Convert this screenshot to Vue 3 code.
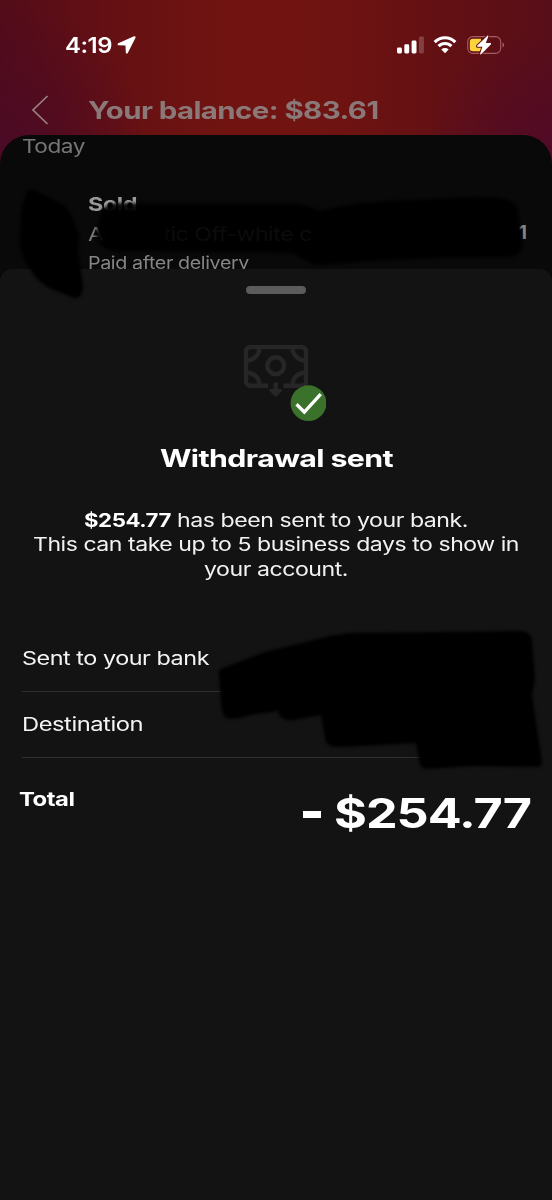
<script setup>
import { ref } from 'vue'

const balance = ref('$83.61')
const amount = ref('$254.77')

// Widens a label horizontally so the typeface reads as an extended grotesque.
const vExtend = {
  mounted(el, binding) {
    const range = document.createRange()
    range.selectNodeContents(el)
    const natural = range.getBoundingClientRect().width
    if (!natural) return
    el.style.width = binding.value + 'px'
    el.style.transform = `scaleX(${binding.value / natural})`
  }
}
</script>

<template>
  <main class="phone">
    <div class="status">
      <div class="clock">
        <span v-extend="47" class="x time">4:19</span>
        <svg width="20" height="20" viewBox="0 0 20 20"><path d="M17 1.300 1.300 8.300c-1.100.5-.9 1.800.3 1.900l6.900.2.300 7.200c.1 1.300 1.500 1.400 2 .300L18.500 2.800c.5-1.100-.4-2-1.500-1.500Z" fill="#fff" /></svg>
      </div>
      <div class="indicators">
        <svg width="27" height="18" viewBox="0 0 27 18" fill="#fff">
          <rect x="0" y="11.5" width="4.9" height="6" rx="1.4" />
          <rect x="7.3" y="8.3" width="4.9" height="9.2" rx="1.4" />
          <rect x="14.6" y="4.5" width="4.9" height="13" rx="1.4" />
          <rect x="22" y=".5" width="4.9" height="17" rx="1.4" opacity=".2" />
        </svg>
        <svg width="24" height="18" viewBox="0 0 24 18" fill="none" stroke="#fff" stroke-width="3.1">
          <path d="M1.7 6.1a14.5 14.5 0 0 1 20.6 0" />
          <path d="M5.6 10.2a9 9 0 0 1 12.8 0" />
          <path d="M12 17.2 8.3 13.5a5.4 5.4 0 0 1 7.4 0Z" fill="#fff" stroke="none" />
        </svg>
        <svg width="38" height="20" viewBox="0 0 38 20">
          <rect x=".7" y="1.6" width="33" height="16.8" rx="5.2" fill="none" stroke="#a65d61" stroke-width="1.1" />
          <path d="M35.5 7.5v5c2.2-.8 2.2-4.2 0-5Z" fill="#a65d61" />
          <path d="M6 3.7h8v12.600H6A3.200 3.200 0 0 1 2.800 13V7A3.200 3.200 0 0 1 6 3.700Z" fill="#fbd33c" />
          <path d="M20.200.9 10.300 10.500c-.6.7-.2 1.300.6 1.300h4.500l-2.200 6.600c-.3 1 .5 1.300 1.200.6l9.400-9.600c.6-.7.2-1.300-.6-1.300h-4.400L21.300 1.500c.3-.9-.5-1.300-1.100-.6Z" fill="#fff" stroke="#611114" stroke-width="2" paint-order="stroke" />
        </svg>
      </div>
    </div>

    <header class="bar">
      <svg class="back" width="18" height="32" viewBox="0 0 18 32"><path d="M16.500 2 2 16l14.500 14" fill="none" stroke="#9a8083" stroke-width="1.700" /></svg>
      <h1 v-extend="290.5" class="x">Your balance: {{ balance }}</h1>
    </header>

    <section class="history">
      <div class="day"><span v-extend="63" class="x">Today</span></div>
      <div class="entry">
        <div class="lines">
          <div class="l1"><b v-extend="49" class="x">Sold</b></div>
          <div class="l2"><span v-extend="224" class="x">Authentic Off-white c</span></div>
          <div class="l3"><span v-extend="161" class="x">Paid after delivery</span></div>
        </div>
        <b class="price">1</b>
      </div>
    </section>

    <section class="sheet">
      <div class="grip"></div>
      <svg class="emblem" width="84" height="78" viewBox="0 0 84 78" fill="none">
        <g stroke="#262626" stroke-width="4.400">
          <path d="M26 40.700H8.500a4.500 4.500 0 0 1-4.500-4.500V6.500A4.500 4.500 0 0 1 8.500 2h51A4.500 4.500 0 0 1 64 6.500v29.700a4.500 4.500 0 0 1-4.500 4.500H41.500" />
          <circle cx="33.700" cy="20.700" r="8.400" />
          <path d="M4 15.500C11 15.500 17.500 11 17.500 2M64 15.500C57 15.500 50.500 11 50.500 2M4 27.500c7 0 13.500 4.200 13.500 13.200M64 27.500c-7 0-13.500 4.200-13.500 13.200" />
          <path d="M33.700 37.500v9" />
          <path d="M29 45.500h9.500l-4.800 4.600Z" fill="#262626" stroke-width="3" stroke-linejoin="round" />
        </g>
        <circle cx="66.500" cy="58.200" r="17.900" fill="#3a722c" />
        <path d="m55.700 60.400 6.600 6.600L77.600 50.400" stroke="#fff" stroke-width="3.300" stroke-linecap="square" />
      </svg>
      <h2><span v-extend="233" class="x">Withdrawal sent</span></h2>
      <div class="message">
        <div><b v-extend="87" class="x">{{ amount }}</b><span v-extend="291" class="x">has been sent to your bank.</span></div>
        <div><span v-extend="486" class="x">This can take up to 5 business days to show in</span></div>
        <div><span v-extend="144" class="x">your account.</span></div>
      </div>
      <div class="row"><span v-extend="187" class="x">Sent to your bank</span></div>
      <div class="row"><span v-extend="121" class="x">Destination</span></div>
      <div class="total">
        <b v-extend="55.5" class="x">Total</b>
        <strong><span class="minus"></span><span v-extend="197" class="x">{{ amount }}</span></strong>
      </div>
    </section>

    <svg class="marker" width="552" height="800" viewBox="0 0 552 800">
      <path d="M27 191 Q31 188 38 192L62 204Q68 207 71 215L79 235 78 253 83 285Q83 299 74 298L47 287 36 278 24 259 20 247 21 212Z" />
      <path d="M101 212Q105 203 120 203L160 204 300 204 322 211Q350 202 410 200L470 197Q512 196 517 206L522 240Q524 256 510 257L440 258 370 261 325 265Q311 266 305 260L292 253 120 251Q99 251 96 235Z" opacity=".91" />
      <path d="M107 210H166V248H104ZM318 212H510V250H318Z" />
      <path d="M219 675Q217 669 226 667L265 652 330 636Q350 632 370 633L520 631Q531 631 532 641L535 679 532 695 542 762Q543 767 535 767L470 766 428 769Q420 769 419 760L416 743 340 747Q326 748 325 738L321 715 294 720Q280 722 278 711L250 715Q236 720 226 718 222 715 221 702Z" />
    </svg>
  </main>
</template>

<style>
html, body { background: #131313; }
</style>

<style scoped>
.phone {
  position: relative;
  width: 552px;
  height: 1200px;
  overflow: hidden;
  font-family: Inter, "Liberation Sans", sans-serif;
  color: #fff;
  background:
    radial-gradient(ellipse 150px 150px at 0 150px, #4b0a25 0%, rgba(75, 10, 37, 0) 100%),
    radial-gradient(ellipse 130px 120px at 552px 150px, #510a27 0%, rgba(81, 10, 39, 0) 100%),
    linear-gradient(90deg, #520c19 0, #620f14 90px, #6a1212 160px, #711411 230px, #711411 300px, #6b1212 370px, #621014 450px, #580e18 552px);
}
.x { display: inline-block; white-space: nowrap; text-align: left; transform-origin: 0 50%; letter-spacing: -0.02em; }
h1, h2 { margin: 0; }
.status { display: flex; justify-content: space-between; align-items: center; height: 24px; padding: 33px 47.500px 0 65px; }
.clock { display: flex; align-items: center; gap: 5px; }
.time { font-size: 22px; line-height: 24px; font-weight: 600; }
.indicators { display: flex; align-items: center; gap: 9.500px; }
.bar { display: flex; align-items: center; height: 30px; margin-top: 38px; padding-left: 31px; gap: 39px; }
.bar h1 { font-size: 24px; line-height: 30px; font-weight: 700; color: #8b7878; padding-top: 2px; }
.history { height: 220px; margin-top: 10px; background: #090909; border-radius: 29px 29px 0 0; color: #777; overflow: hidden; }
.day { padding-left: 22px; font-size: 18.500px; line-height: 22px; height: 59px; }
.entry { display: flex; justify-content: space-between; padding: 0 25px 0 88px; }
.lines { font-size: 19px; line-height: 22px; }
.l1 { height: 30px; color: #999; }
.l2 { height: 28px; }
.l3 { font-size: 17.500px; color: #858585; }
.price { font-size: 19px; line-height: 22px; margin-top: 28px; color: #858585; }
.sheet { position: absolute; left: 0; top: 269px; width: 100%; height: 931px; box-sizing: border-box; background: #131313; border-radius: 12px 12px 0 0; padding: 17px 22px 0; }
.grip { width: 60px; height: 8px; border-radius: 4px; background: #5c5c5c; margin: 0 auto; }
.emblem { display: block; margin: 51px 0 0 220px; }
h2 { display: flex; justify-content: center; font-size: 24px; line-height: 30px; font-weight: 700; margin-top: 21px; height: 30px; }
.message { margin: 33.500px -10px 0; font-size: 18.500px; color: #f2f2f2; }
.message div { display: flex; justify-content: center; gap: 6px; line-height: 24.500px; height: 24.500px; }
.message b { color: #fff; }
.row { height: 65px; line-height: 64px; border-bottom: 1px solid #303030; font-size: 18.500px; color: #f4f4f4; }
.message + .row { margin-top: 44.500px; }
.total { display: flex; justify-content: space-between; align-items: flex-start; margin: 31px -1px 0 -3px; }
.total b { font-size: 19px; line-height: 22px; }
.total strong { display: flex; align-items: center; gap: 13px; font-size: 41px; line-height: 50px; margin-top: -1px; }
.minus { width: 18px; height: 7px; background: #fff; margin-top: 4px; }
.marker { position: absolute; left: 0; top: 0; filter: blur(1.500px); }
</style>
